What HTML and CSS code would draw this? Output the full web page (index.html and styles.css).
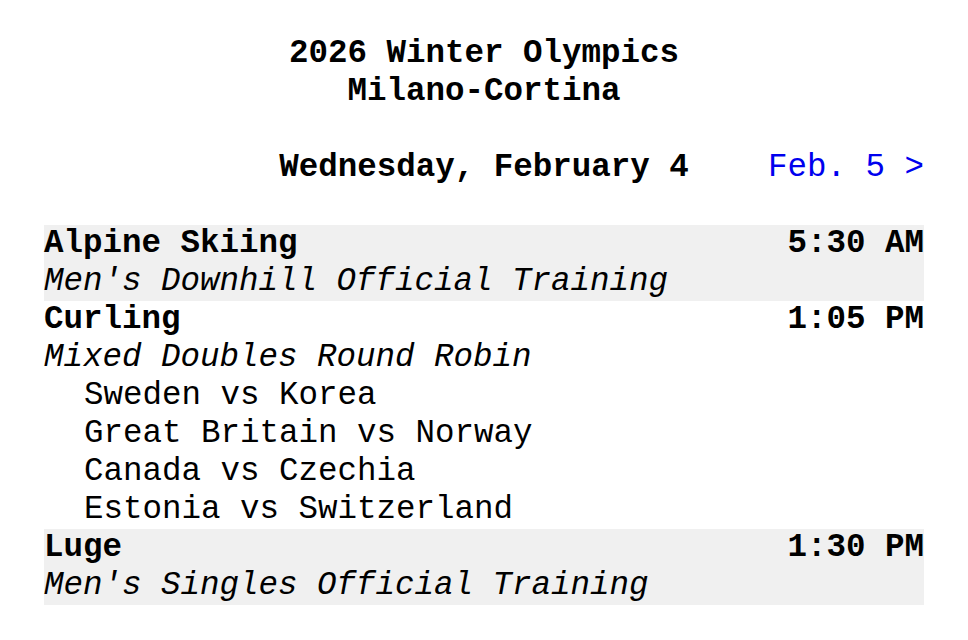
FILE: index.html
```html
<!DOCTYPE html>
<html lang="en">
<head>
<meta charset="utf-8">
<title>2026 Winter Olympics Milano-Cortina</title>
<link rel="stylesheet" href="styles.css">
</head>
<body>
<div class="page">
  <h1 class="title">2026 Winter Olympics<br>Milano-Cortina</h1>
  <div class="datebar">
    <span class="prev"></span>
    <span class="today">Wednesday, February 4</span>
    <a class="next" href="#">Feb. 5 &gt;</a>
  </div>
  <div class="events">
    <div class="event shaded">
      <div class="head"><span>Alpine Skiing</span><span>5:30 AM</span></div>
      <div class="desc">Men's Downhill Official Training</div>
    </div>
    <div class="event">
      <div class="head"><span>Curling</span><span>1:05 PM</span></div>
      <div class="desc">Mixed Doubles Round Robin</div>
      <div class="match">Sweden vs Korea</div>
      <div class="match">Great Britain vs Norway</div>
      <div class="match">Canada vs Czechia</div>
      <div class="match">Estonia vs Switzerland</div>
    </div>
    <div class="event shaded">
      <div class="head"><span>Luge</span><span>1:30 PM</span></div>
      <div class="desc">Men's Singles Official Training</div>
    </div>
  </div>
</div>
</body>
</html>
```
FILE: styles.css
```css
html, body {
  margin: 0;
  padding: 0;
  background: #ffffff;
}
body {
  font-family: "Liberation Mono", "Courier New", monospace;
  font-size: 32.5px;
  line-height: 38px;
  color: #000000;
}
.page {
  padding: 35px 44px 0 44px;
}
.title {
  margin: 0;
  font-size: 32.5px;
  line-height: 38px;
  font-weight: bold;
  text-align: center;
}
.datebar {
  display: grid;
  grid-template-columns: 1fr auto 1fr;
  margin-top: 38px;
  font-weight: bold;
}
.today {
  text-align: center;
}
.next {
  justify-self: end;
  font-weight: normal;
  color: #0000ee;
  text-decoration: none;
}
.events {
  margin-top: 38px;
}
.event.shaded {
  background: #f0f0f0;
}
.head {
  display: flex;
  justify-content: space-between;
  font-weight: bold;
}
.desc {
  font-style: italic;
}
.match {
  padding-left: 40px;
}
```
